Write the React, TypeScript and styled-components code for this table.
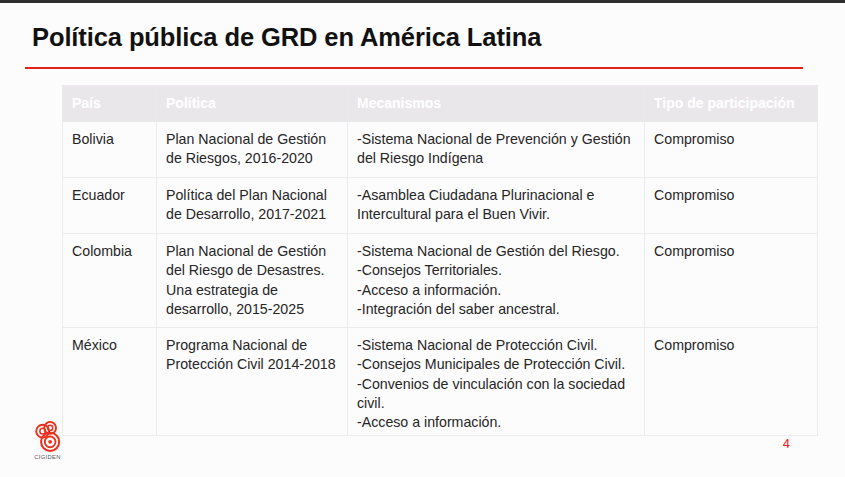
import React from 'react';
import styled, { createGlobalStyle } from 'styled-components';

const GlobalStyle = createGlobalStyle`
   html, body {
      margin: 0;
      padding: 0;
      background: #fdfcfd;
   }
   body {
      font-family: "Liberation Sans", Arial, sans-serif;
      color: #222;
   }
`;

const Slide = styled.div`
   width: 845px;
   height: 477px;
   box-sizing: border-box;
   border-top: 3px solid #2e2e2e;
   background: #fdfcfd;
   display: flex;
   flex-direction: column;
   overflow: hidden;
`;

const Title = styled.h1`
   margin: 18px 0 0 32px;
   font-family: "Liberation Sans", Arial, sans-serif;
   font-size: 25.5px;
   font-weight: 700;
   letter-spacing: -0.1px;
   color: #111;
   line-height: 32px;
`;

const Rule = styled.hr`
   margin: 14px 42px 0 25px;
   border: none;
   height: 2px;
   background: #e3231b;
`;

const Table = styled.table`
   margin: 16px 0 0 62px;
   width: 755px;
   border-collapse: collapse;
   table-layout: fixed;
   font-size: 14.2px;
   line-height: 19.3px;
`;

const HeadCell = styled.th<{ $w: number }>`
   width: ${(p) => p.$w}px;
   box-sizing: border-box;
   height: 36px;
   padding: 0 9px;
   background: #e9e7ea;
   color: #fff;
   font-size: 14px;
   font-weight: 700;
   text-align: left;
   white-space: nowrap;
   border: 1px solid #ebe9ec;
`;

const Cell = styled.td<{ $h: number }>`
   height: ${(p) => p.$h}px;
   box-sizing: border-box;
   padding: 8px 8px 0 9px;
   vertical-align: top;
   color: #252525;
   border: 1px solid #ececee;
`;

const Footer = styled.div`
   display: flex;
   justify-content: space-between;
   align-items: flex-start;
   margin: -16px 55px 0 31px;
`;

const Logo = styled.div`
   display: flex;
   flex-direction: column;
   align-items: center;
   width: 33px;

   span {
      font-size: 5.8px;
      letter-spacing: 0.3px;
      color: #555;
      margin-top: 1px;
   }
`;

const PageNum = styled.span`
   margin-top: 16px;
   font-size: 13px;
   color: #e3231b;
`;

const rows = [
   {
      h: 56,
      pais: 'Bolivia',
      politica: ['Plan Nacional de Gestión', 'de Riesgos, 2016-2020'],
      mec: ['-Sistema Nacional de Prevención y Gestión', 'del Riesgo Indígena'],
   },
   {
      h: 56,
      pais: 'Ecuador',
      politica: ['Política del Plan Nacional', 'de Desarrollo, 2017-2021'],
      mec: ['-Asamblea Ciudadana Plurinacional e', 'Intercultural para el Buen Vivir.'],
   },
   {
      h: 94,
      pais: 'Colombia',
      politica: ['Plan Nacional de Gestión', 'del Riesgo de Desastres.', 'Una estrategia de', 'desarrollo, 2015-2025'],
      mec: [
         '-Sistema Nacional de Gestión del Riesgo.',
         '-Consejos Territoriales.',
         '-Acceso a información.',
         '-Integración del saber ancestral.',
      ],
   },
   {
      h: 108,
      pais: 'México',
      politica: ['Programa Nacional de', 'Protección Civil 2014-2018'],
      mec: [
         '-Sistema Nacional de Protección Civil.',
         '-Consejos Municipales de Protección Civil.',
         '-Convenios de vinculación con la sociedad',
         'civil.',
         '-Acceso a información.',
      ],
   },
];

const Lines: React.FC<{ items: string[] }> = ({ items }) => (
   <>
      {items.map((t, i) => (
         <div key={i}>{t}</div>
      ))}
   </>
);

// three overlapping target rings, as in the CIGIDEN mark
const CigidenMark = () => (
   <svg width="30" height="33" viewBox="0 0 28 30" fill="none" stroke="#e8321e">
      <circle cx="9" cy="10" r="6" strokeWidth="1.8" />
      <circle cx="9" cy="10" r="2.6" strokeWidth="1.4" />
      <circle cx="16" cy="7" r="5.5" strokeWidth="1.8" />
      <circle cx="16" cy="7" r="2.4" strokeWidth="1.4" />
      <circle cx="16" cy="20" r="8.5" strokeWidth="1.9" />
      <circle cx="16" cy="20" r="5" strokeWidth="1.7" />
      <circle cx="16" cy="20" r="1.8" fill="#e8321e" stroke="none" />
   </svg>
);

const App: React.FC = () => {
   return (
      <>
         <GlobalStyle />
         <Slide>
            <Title>Política pública de GRD en América Latina</Title>
            <Rule />
            <Table>
               <thead>
                  <tr>
                     <HeadCell $w={94}>País</HeadCell>
                     <HeadCell $w={191}>Política</HeadCell>
                     <HeadCell $w={297}>Mecanismos</HeadCell>
                     <HeadCell $w={173}>Tipo de participación</HeadCell>
                  </tr>
               </thead>
               <tbody>
                  {rows.map((r) => (
                     <tr key={r.pais}>
                        <Cell $h={r.h}>{r.pais}</Cell>
                        <Cell $h={r.h}>
                           <Lines items={r.politica} />
                        </Cell>
                        <Cell $h={r.h}>
                           <Lines items={r.mec} />
                        </Cell>
                        <Cell $h={r.h}>Compromiso</Cell>
                     </tr>
                  ))}
               </tbody>
            </Table>
            <Footer>
               <Logo>
                  <CigidenMark />
                  <span>CIGIDEN</span>
               </Logo>
               <PageNum>4</PageNum>
            </Footer>
         </Slide>
      </>
   );
};

export default App;
